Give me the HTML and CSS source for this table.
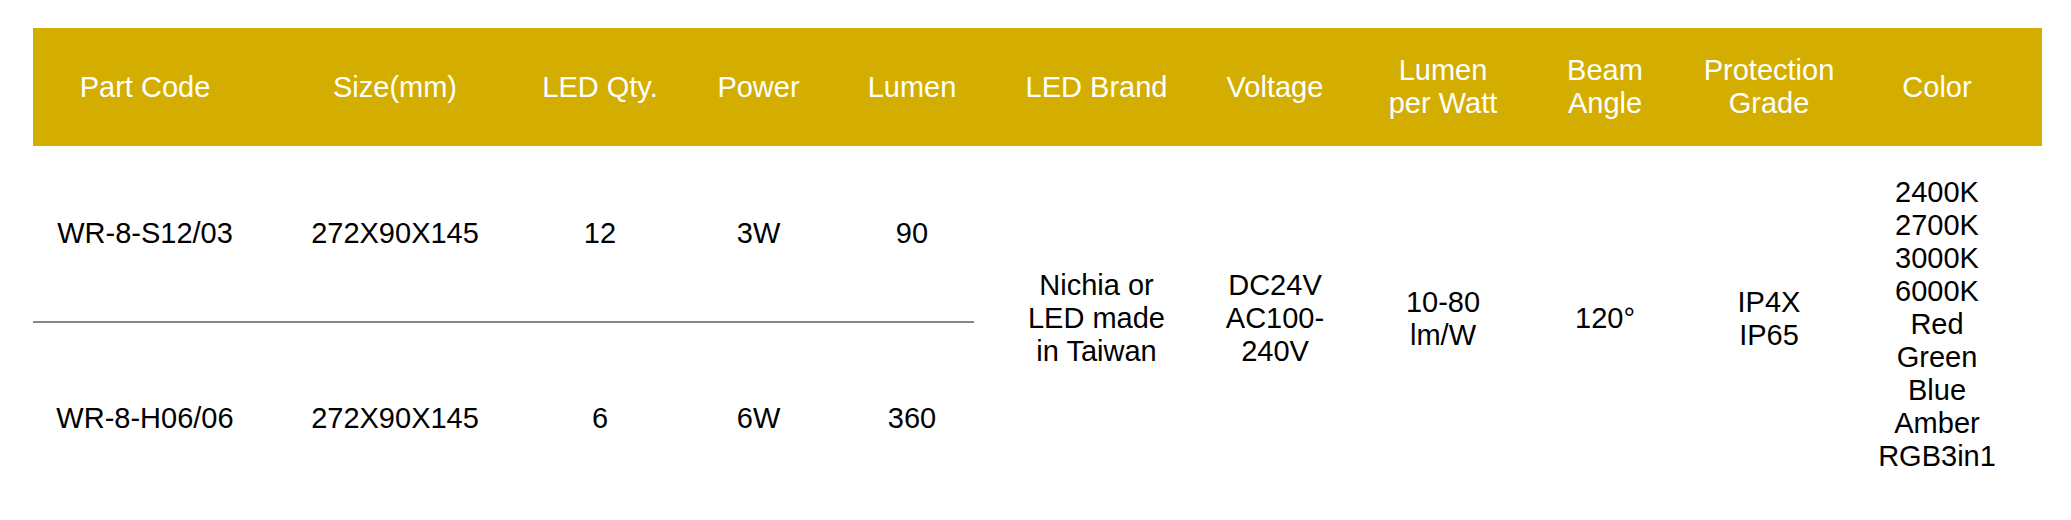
FILE: index.html
```html
<!DOCTYPE html>
<html lang="en">
<head>
<meta charset="utf-8">
<title>Spec table</title>
<link rel="stylesheet" href="styles.css">
</head>
<body>
<div class="spec">
  <div class="th">Part Code</div>
  <div class="th">Size(mm)</div>
  <div class="th">LED Qty.</div>
  <div class="th">Power</div>
  <div class="th">Lumen</div>
  <div class="th brand">LED Brand</div>
  <div class="th volt">Voltage</div>
  <div class="th eff">Lumen<br>per Watt</div>
  <div class="th beam">Beam<br>Angle</div>
  <div class="th ip">Protection<br>Grade</div>
  <div class="th color">Color</div>

  <div class="td first">WR-8-S12/03</div>
  <div class="td first">272X90X145</div>
  <div class="td first">12</div>
  <div class="td first">3W</div>
  <div class="td first">90</div>
  <div class="td span brand">Nichia or<br>LED made<br>in Taiwan</div>
  <div class="td span volt">DC24V<br>AC100-<br>240V</div>
  <div class="td span eff">10-80<br>lm/W</div>
  <div class="td span beam">120°</div>
  <div class="td span ip">IP4X<br>IP65</div>
  <div class="td span color colors">2400K<br>2700K<br>3000K<br>6000K<br>Red<br>Green<br>Blue<br>Amber<br>RGB3in1</div>

  <div class="td">WR-8-H06/06</div>
  <div class="td">272X90X145</div>
  <div class="td">6</div>
  <div class="td">6W</div>
  <div class="td">360</div>
</div>
</body>
</html>
```

FILE: styles.css
```css
html, body {
  margin: 0;
  padding: 0;
  background: #ffffff;
}

.spec {
  margin: 28px 0 0 33px;
  width: 2009px;
  display: grid;
  grid-template-columns: 224px 276px 134px 183px 124px 236px 138px 180px 162px 150px 202px;
  grid-template-rows: 118px 177px 190px;
  font-family: "Liberation Sans", Arial, sans-serif;
  font-size: 29px;
  line-height: 33px;
  color: #000000;
}

.th,
.td {
  display: flex;
  align-items: center;
  justify-content: center;
  text-align: center;
  box-sizing: border-box;
}

.th {
  background: #d3ae00;
  color: #ffffff;
}

.td.first {
  border-bottom: 2px solid #868686;
}

.td.span {
  grid-row: span 2;
  padding-bottom: 22px;
}

.td.colors {
  padding-bottom: 10px;
}

/* optical centring of the right-hand columns */
.brand { padding-left: 9px; }
.volt  { padding-right: 8px; }
.eff   { padding-left: 10px; }
.beam  { padding-right: 8px; }
.ip    { padding-left: 8px; }
.color { padding-right: 8px; }
```
